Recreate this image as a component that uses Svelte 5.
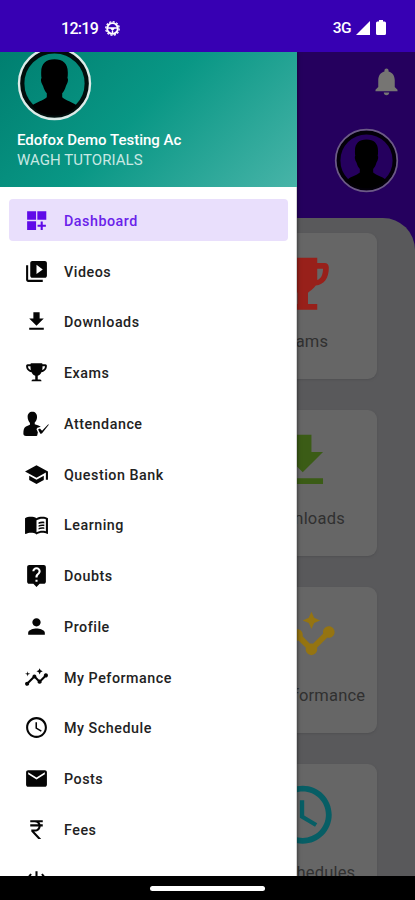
<script>
  const menu = [
    { label: 'Dashboard', icon: 'M3 3h8.600v8.200H3zM12.800 3H21.400v8.200h-8.600zM3 12.800h8.600V21H3zM18 13h-2v3h-3v2h3v3h2v-3h3v-2h-3z', active: true },
    { label: 'Videos', icon: 'M4 6H2v14c0 1.1.9 2 2 2h14v-2H4V6zm16-4H8c-1.1 0-2 .9-2 2v12c0 1.1.9 2 2 2h12c1.1 0 2-.9 2-2V4c0-1.1-.9-2-2-2zm-8 12.5v-9l6 4.5-6 4.5z' },
    { label: 'Downloads', icon: 'M19 9h-4V3H9v6H5l7 7 7-7zM5 18v2h14v-2H5z' },
    { label: 'Exams', icon: 'M7 3h10q.8 0 .8 1H20.500q1.500 0 1.500 1.500c0 3.300-2 5.700-5.300 6.200-.7 1.700-1.800 2.800-3.500 3.300v3.700h2.300q1.300 0 1.300 1.800H7.200q0-1.800 1.300-1.800h2.300V15c-1.700-.5-2.800-1.600-3.500-3.300C4 11.200 2 8.800 2 5.500Q2 4 3.500 4H6.200q0-1 .8-1zM3.800 6c.1 1.800 1.100 3.200 2.800 3.700-.3-1-.4-2.300-.4-3.700zm16.400 0h-2.400c0 1.400-.1 2.700-.4 3.700 1.700-.5 2.700-1.900 2.800-3.700z' },
    { label: 'Attendance', icon: 'M8 .8c2.800 0 4.500 2 4.500 5 0 2.200-1 4.200-2.200 5.300v1.600l3.600 1.200 2.200 1.200-1.600.6-1.700.3-.8 1.600 1.300 2.700-.6 3.200-.7.400H2c-2 0-2.600-.8-2.600-2.300 0-3.500.6-5.900 2.500-6.800l3.800-1.700v-1.600C4.500 10 3.500 8 3.500 5.800c0-3 1.700-5 4.500-5zM13.500 17.800l1.800-1 2 2.200 6-6.400.5.500-6.600 8.600-1.500.2z' },
    { label: 'Question Bank', icon: 'M5 13.180v4L12 21l7-3.820v-4L12 17l-7-3.820zM12 3L1 9l11 6 9-4.910V17h2V9L12 3z' },
    { label: 'Learning', icon: 'M21 5c-1.110-.35-2.330-.5-3.500-.5-1.950 0-4.050.4-5.500 1.500-1.450-1.100-3.550-1.500-5.500-1.500S2.450 4.900 1 6v14.650c0 .25.25.5.5.5.1 0 .15-.05.25-.05C3.100 20.450 5.050 20 6.500 20c1.950 0 4.050.4 5.500 1.500 1.350-.85 3.800-1.500 5.500-1.500 1.650 0 3.350.3 4.750 1.050.1.05.15.05.25.05.25 0 .5-.25.5-.5V6c-.6-.45-1.250-.75-2-1zm0 13.500c-1.100-.35-2.300-.5-3.500-.5-1.700 0-4.150.65-5.500 1.500V8c1.350-.85 3.800-1.500 5.500-1.500 1.200 0 2.400.15 3.500.5v11.500zM14 9.900c1.700-.7 3.700-.9 5.500-.5V11c-1.900-.4-3.900-.2-5.500.5zM14 12.600c1.700-.7 3.700-.9 5.500-.5v1.600c-1.900-.4-3.900-.2-5.500.5zM14 15.300c1.700-.7 3.700-.9 5.500-.5v1.600c-1.900-.4-3.900-.2-5.500.5z' },
    { label: 'Doubts', icon: 'M19 2H5c-1.110 0-2 .9-2 2v14c0 1.100.89 2 2 2h4l3 3 3-3h4c1.100 0 2-.9 2-2V4c0-1.100-.9-2-2-2zm-6 16h-2v-2h2v2zm2.070-7.750l-.9.92C13.450 11.900 13 12.500 13 14h-2v-.5c0-1.100.45-2.100 1.170-2.830l1.240-1.260c.37-.36.59-.86.59-1.410 0-1.100-.9-2-2-2s-2 .9-2 2H8c0-2.210 1.790-4 4-4s4 1.790 4 4c0 .88-.36 1.680-.93 2.250z' },
    { label: 'Profile', icon: 'M12 12c2.210 0 4-1.790 4-4s-1.790-4-4-4-4 1.790-4 4 1.790 4 4 4zm0 2c-2.670 0-8 1.340-8 4v2h16v-2c0-2.660-5.330-4-8-4z' },
    { label: 'My Peformance', icon: 'M21 8c-1.450 0-2.260 1.440-1.930 2.510l-3.550 3.560c-.3-.09-.74-.09-1.040 0l-2.550-2.550C12.270 10.450 11.460 9 10 9c-1.450 0-2.270 1.440-1.930 2.520l-4.560 4.550C2.440 15.740 1 16.550 1 18c0 1.100.9 2 2 2 1.450 0 2.260-1.440 1.930-2.510l4.550-4.560c.3.09.74.09 1.040 0l2.550 2.550C12.730 16.550 13.540 18 15 18c1.450 0 2.270-1.440 1.930-2.520l3.560-3.550C21.560 12.260 23 11.450 23 10c0-1.100-.9-2-2-2zM15 9l.94-2.070L18 6l-2.060-.93L15 3l-.92 2.070L12 6l2.080.93zM3.500 11L4 9l2-.5L4 8l-.5-2L3 8l-2 .5L3 9z' },
    { label: 'My Schedule', icon: 'M11.990 2C6.470 2 2 6.480 2 12s4.470 10 9.990 10C17.520 22 22 17.520 22 12S17.520 2 11.990 2zM12 20c-4.420 0-8-3.580-8-8s3.580-8 8-8 8 3.580 8 8-3.580 8-8 8zm.5-13H11v6l5.250 3.150.75-1.230-4.500-2.670z' },
    { label: 'Posts', icon: 'M20 4H4c-1.100 0-1.990.9-1.990 2L2 18c0 1.100.9 2 2 2h16c1.100 0 2-.9 2-2V6c0-1.100-.9-2-2-2zm0 4l-8 5-8-5V6l8 5 8-5v2z' },
    { label: 'Fees', icon: 'M13.660 7c-.56-1.180-1.760-2-3.160-2H6V3h12v2h-3.260c.48.58.84 1.260 1.050 2H18v2h-2.020c-.25 2.800-2.610 5-5.480 5h-.73l6.730 7h-2.770L7 14v-2h3.500c1.760 0 3.220-1.300 3.460-3H6V7h7.660z' },
    { label: '', icon: 'M13 3h-2v10h2V3zm4.830 2.170l-1.420 1.420C17.990 7.860 19 9.810 19 12c0 3.870-3.130 7-7 7s-7-3.130-7-7c0-2.190 1.010-4.140 2.580-5.420L6.170 5.170C4.230 6.820 3 9.260 3 12c0 4.970 4.030 9 9 9s9-4.030 9-9c0-2.740-1.230-5.180-3.170-6.830z' }
  ];

  const tiles = [
    { label: 'Exams', tone: 'red', icon: 'M7 3h10v1.800h2.500Q21 4.800 21 6.500c0 3.500-1.600 5.900-4.500 6.100-.8 1.200-2 1.900-2.700 2.500V19H17v2H7v-2h3.200v-3.900c-.7-.6-1.900-1.300-2.700-2.500C4.600 12.400 3 10 3 6.500Q3 4.800 4.500 4.800H7zM5 6.800c0 2 .7 3.500 2 3.900V6.800zm14 0h-2v3.900c1.300-.4 2-1.900 2-3.900z' },
    { label: 'Downloads', tone: 'green', icon: menu[2].icon },
    { label: 'My Performance', tone: 'amber', icon: menu[9].icon },
    { label: 'My Schedules', tone: 'teal', icon: menu[10].icon }
  ];
</script>

{#snippet glyph(d)}
  <svg viewBox="0 0 24 24" overflow="visible"><path {d} fill="currentColor" fill-rule="evenodd" /></svg>
{/snippet}

{#snippet person(ring, ringWidth)}
  <svg viewBox="0 0 76 76">
    <circle cx="38" cy="38" r="33" fill="none" stroke="#000" stroke-width="5" opacity=".9" />
    <circle cx="38" cy="38" r="36" fill="none" stroke={ring} stroke-width={ringWidth} />
    <path d="M38 13.500c8.500 0 13.500 4.500 13.500 13 0 2.500 0 4-.4 6 1.100 1 .7 4.500-1.500 8-.9 3.500-2.300 5.500-3.800 7.500v4c4 3.500 10 4.500 15 8.500C55 67.500 47 70.500 38 70.500S21 67.500 15.200 60.500c5-4 11-5 15-8.500v-4c-1.500-2-2.900-4-3.800-7.500-2.200-3.500-2.600-7-1.500-8-.4-2-.4-3.500-.4-6 0-8.500 5-13 13.500-13z" fill="#000" />
  </svg>
{/snippet}

<div class="phone">
  <header class="status">
    <span class="time">12:19</span>
    <svg class="gear" viewBox="0 0 16 16" fill="none" stroke="#fff">
      <circle cx="8" cy="8" r="5.700" stroke-width="2" />
      <circle cx="8" cy="8" r="7.200" stroke-width="1.400" stroke-dasharray="2.200 1.570" />
      <path d="M3 7.500h10M8 8v5M6 7.500l2 2 2-2" stroke-width="1.500" />
    </svg>
    <span class="net">3G</span>
    <svg class="signal" viewBox="0 0 14 14"><path d="M14 0v14H0z" fill="#fff" /></svg>
    <svg class="battery" viewBox="0 0 10 15"><path d="M3 0h4v1.500h1.500Q10 1.500 10 3v10.500Q10 15 8.500 15h-7Q0 15 0 13.500V3q0-1.500 1.500-1.500H3z" fill="#fff" /></svg>
  </header>

  <div class="stage">
    <main class="home">
      <div class="top">
        <div class="bell">{@render glyph('M12 22c1.100 0 2-.9 2-2h-4c0 1.100.89 2 2 2zm6-6v-5c0-3.070-1.640-5.640-4.500-6.320V4c0-.83-.67-1.500-1.500-1.500s-1.500.67-1.500 1.500v.68C7.630 5.360 6 7.920 6 11v5l-2 2v1h16v-1l-2-2z')}</div>
        <div class="me">{@render person('#6c5a86', 2)}</div>
      </div>
      <section class="surface">
        {#each tiles as tile}
          <article class="tile {tile.tone}">
            {@render glyph(tile.icon)}
            <span>{tile.label}</span>
          </article>
        {/each}
      </section>
    </main>

    <aside class="drawer">
      <div class="profile">
        <div class="avatar">{@render person('#dcebe8', 2.4)}</div>
        <strong>Edofox Demo Testing Ac</strong>
        <span>WAGH TUTORIALS</span>
      </div>
      <nav>
        {#each menu as item}
          <div class="row" class:active={item.active}>
            {@render glyph(item.icon)}
            <span>{item.label}</span>
          </div>
        {/each}
      </nav>
    </aside>
  </div>

  <footer><i></i></footer>
</div>

<style>
  .phone {
    width: 415px;
    height: 900px;
    display: flex;
    flex-direction: column;
    overflow: hidden;
    font-family: Roboto, 'Liberation Sans', sans-serif;
    background: #000;
  }
  svg { display: block; flex: none; }
  .status {
    flex: none;
    height: 52px;
    box-sizing: border-box;
    display: flex;
    align-items: center;
    padding: 4px 29px 0 61px;
    background: #3700b3;
    color: #fff;
    font-size: 16px;
    font-weight: 500;
  }
  .time { width: 44px; letter-spacing: -0.7px; }
  .gear { width: 15px; height: 15px; overflow: visible; }
  .net { margin-left: auto; font-size: 15.500px; letter-spacing: -0.5px; }
  .signal { width: 14px; height: 14px; margin-left: 5px; }
  .battery { width: 10px; height: 15px; margin: -1px 0 0 6px; }

  .stage { position: relative; height: 824px; overflow: hidden; flex: none; }
  .home { display: flex; flex-direction: column; height: 100%; background: #25005e; }
  .top {
    flex: none;
    height: 165.500px;
    display: flex;
    flex-direction: column;
    align-items: flex-end;
  }
  .bell { margin: 13px 12px 0 0; color: #767573; }
  .bell svg { width: 33px; height: 33px; }
  .me { margin: 30px 16px 0 0; }
  .me svg { width: 65px; height: 65px; }
  .surface {
    flex: none;
    height: 720px;
    box-sizing: border-box;
    padding: 15.500px 38px 0 0;
    display: flex;
    flex-direction: column;
    align-items: flex-end;
    gap: 31px;
    background: #59595b;
    border-radius: 0 32px 0 0;
  }
  .tile {
    flex: none;
    width: 148px;
    height: 146px;
    box-sizing: border-box;
    padding-top: 16px;
    display: flex;
    flex-direction: column;
    align-items: center;
    border-radius: 9px;
    background: #666;
    box-shadow: 0 1px 2px #505052;
  }
  .tile svg { width: 69.500px; height: 69.500px; }
  .tile span {
    margin-top: 12.700px;
    font-size: 16.500px;
    line-height: 22px;
    letter-spacing: 0.2px;
    color: #303030;
    white-space: nowrap;
  }
  .tile.red { color: #98201a; }
  .tile.green { color: #3b5c16; }
  .tile.amber { color: #957411; }
  .tile.teal { color: #075e65; }

  .drawer {
    position: absolute;
    inset: 0 auto 0 0;
    width: 296.500px;
    box-sizing: border-box;
    background: #fff;
    border-right: 1px solid #d4d4d4;
    box-shadow: 0 0 4px rgba(0, 0, 0, 0.6);
  }
  .profile {
    height: 134.500px;
    margin-right: -1px;
    box-sizing: border-box;
    padding-left: 17px;
    display: flex;
    flex-direction: column;
    background: linear-gradient(135deg, #007f70 0%, #099785 46%, #48b4a8 100%);
    color: #fff;
  }
  .avatar { margin-top: -6px; }
  .avatar svg { width: 75px; height: 75px; }
  .profile strong { margin-top: 9px; font-size: 15px; line-height: 20px; font-weight: 500; letter-spacing: 0; }
  .profile span { font-size: 15px; line-height: 20px; letter-spacing: 0.05px; color: #c8e8e3; }

  nav { display: flex; flex-direction: column; gap: 8.780px; padding: 12.800px 8px 0 9px; }
  .row {
    flex: none;
    height: 42px;
    display: flex;
    align-items: center;
    gap: 15px;
    padding-left: 15px;
    border-radius: 4px;
    color: #050505;
  }
  .row svg { width: 25px; height: 25px; }
  .row span { margin-top: 1px; font-size: 14.300px; font-weight: 500; letter-spacing: 0.52px; color: #222; white-space: nowrap; }
  .row.active { background: #e9dffc; color: #5f0be8; }
  .row.active span { color: #6a22ea; }

  footer { height: 24px; display: flex; justify-content: center; align-items: center; background: #000; }
  footer i { width: 115px; height: 5px; border-radius: 3px; background: #fff; }
</style>
